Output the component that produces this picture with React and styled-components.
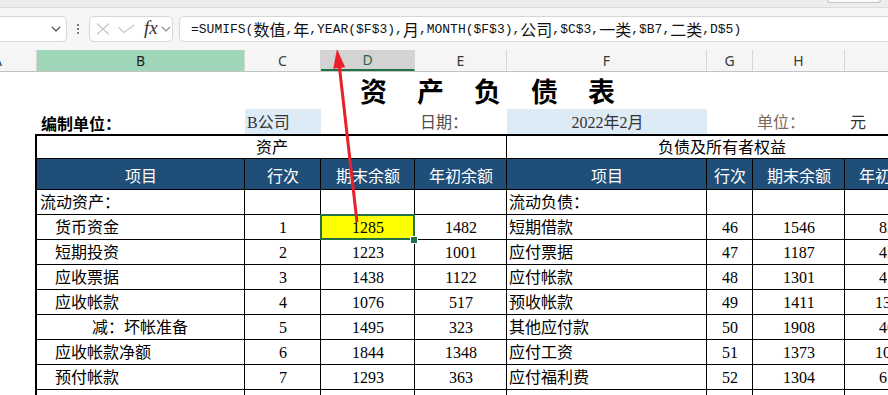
import React from "react";
import styled, { createGlobalStyle, css } from "styled-components";

const COLS = "37px 208px 76px 94px 92px 200px 46px 92px 92px";

const GlobalStyle = createGlobalStyle`
  html, body {
    margin: 0;
    padding: 0;
    background: #fff;
  }
  body {
    width: 888px;
    height: 395px;
    overflow: hidden;
    font-family: "Noto Sans", "Noto Sans CJK SC", sans-serif;
  }
`;

const Page = styled.div`
  position: relative;
  width: 888px;
  height: 395px;
  overflow: hidden;
  display: flex;
  flex-direction: column;
`;

const RibbonEdge = styled.div`
  height: 7px;
  flex-shrink: 0;
  display: flex;
  justify-content: flex-end;
  background: #ededed;
  border-bottom: 1px solid #dcdcdc;
`;

const RibbonButtonTail = styled.div`
  width: 52px;
  height: 2px;
  margin-right: 7px;
  border: 1px solid #c4c4c4;
  border-top: none;
  border-radius: 0 0 4px 4px;
  background: #fafafa;
`;

const FormulaBar = styled.div`
  height: 42px;
  box-sizing: border-box;
  padding: 8px 0;
  flex-shrink: 0;
  display: flex;
  background: #f6f6f6;
`;

const Box = styled.div`
  box-sizing: border-box;
  flex-shrink: 0;
  background: #fff;
  border: 1px solid #d6d6d6;
  border-radius: 5px;
  display: flex;
  align-items: center;
`;

const NameBox = styled(Box)`
  width: 73px;
  margin-left: -6px;
  justify-content: flex-end;
  padding-right: 5px;
`;

const Dots = styled.div`
  width: 22px;
  flex-shrink: 0;
  display: flex;
  flex-direction: column;
  align-items: center;
  justify-content: center;
  gap: 2px;
  span {
    width: 2px;
    height: 2px;
    background: #555;
    border-radius: 1px;
  }
`;

const FxBox = styled(Box)`
  width: 84px;
  padding-left: 6px;
`;

const FxLabel = styled.span`
  font-family: "Liberation Serif", serif;
  font-style: italic;
  font-size: 19px;
  color: #333;
  margin: -3px 3px 0 9px;
`;

const FormulaInput = styled(Box)`
  width: 760px;
  margin-left: 6px;
  padding-left: 11px;
  border-radius: 5px 0 0 5px;
  font-family: "Liberation Mono", monospace;
  font-size: 13px;
  color: #111;
  white-space: nowrap;
`;

const Cjk = styled.span`
  font-family: "Noto Sans CJK SC", sans-serif;
  font-size: 16px;
`;

const HeaderRow = styled.div`
  display: grid;
  grid-template-columns: ${COLS};
  height: 21px;
  flex-shrink: 0;
  background: #f5f5f5;
  border-bottom: 1px solid #c3c3c3;
`;

const ColHead = styled.div`
  box-sizing: border-box;
  display: flex;
  align-items: center;
  justify-content: ${(p) => (p.$edge ? "flex-end" : "center")};
  padding-right: ${(p) => (p.$edge ? "34px" : "0")};
  overflow: hidden;
  font-size: 14px;
  color: #3a3a3a;
  border-right: 1px solid #d6d6d6;
  ${(p) =>
    p.$state === "sel" &&
    css`
      background: #a0d6b8;
      color: #1f1f1f;
    `}
  ${(p) =>
    p.$state === "active" &&
    css`
      background: #d3d3d3;
      color: #1d6b3f;
      border-bottom: 2px solid #217346;
    `}
`;

const Sheet = styled.div`
  display: flex;
  flex-direction: column;
`;

const Row = styled.div`
  display: grid;
  grid-template-columns: ${COLS};
  height: ${(p) => p.$h || 25}px;
  flex-shrink: 0;
`;

const Cell = styled.div`
  position: relative;
  box-sizing: border-box;
  grid-column: span ${(p) => p.$span || 1};
  display: flex;
  align-items: flex-end;
  justify-content: ${(p) =>
    p.$align === "center" ? "center" : p.$align === "right" ? "flex-end" : "flex-start"};
  padding: 0 2px ${(p) => (p.$pb ?? 1)}px ${(p) => p.$indent ?? 3}px;
  white-space: nowrap;
  font-family: "Liberation Serif", "Noto Sans CJK SC", serif;
  font-size: 16px;
  line-height: 20px;
  color: ${(p) => p.$color || "#000"};
  font-weight: ${(p) => (p.$bold ? 700 : 400)};
  background: ${(p) => p.$bg || "transparent"};
  ${(p) =>
    p.$boxed &&
    css`
      border-right: 1px solid #000;
      border-bottom: 1px solid #000;
    `}
  ${(p) =>
    p.$top &&
    css`
      border-top: 2px solid #000;
    `}
  ${(p) =>
    p.$selected &&
    css`
      background: #ffff00;
      &::before {
        content: "";
        position: absolute;
        inset: -1px -1px -1px -1px;
        border: 2px solid #217346;
        z-index: 2;
      }
      &::after {
        content: "";
        position: absolute;
        right: -4px;
        bottom: -5px;
        width: 6px;
        height: 6px;
        background: #217346;
        border: 1px solid #fff;
        z-index: 3;
      }
    `}
`;

const LabelCell = styled(Cell)`
  font-family: "Noto Sans CJK SC", sans-serif;
`;

const EdgeCell = styled.div`
  box-sizing: border-box;
  border-right: 2px solid #000;
`;

const HeadCell = styled(Cell)`
  background: #1f4e79;
  color: #fff;
  font-family: "Noto Sans CJK SC", sans-serif;
  justify-content: center;
  padding-bottom: 4px;
`;

const Title = styled(Cell)`
  font-family: "Noto Sans CJK SC", sans-serif;
  font-size: 27px;
  font-weight: 700;
  letter-spacing: 30px;
  line-height: 32px;
  padding-bottom: 2px;
  & > span {
    margin-right: -30px;
  }
`;

const ArrowLayer = styled.svg`
  position: absolute;
  left: 0;
  top: 0;
  pointer-events: none;
  z-index: 10;
`;

const formula =
  "=SUMIFS(数值,年,YEAR($F$3),月,MONTH($F$3),公司,$C$3,一类,$B7,二类,D$5)";

function FormulaText({ text }) {
  const parts = text.split(/([\u4e00-\u9fff]+)/).filter(Boolean);
  return parts.map((p, i) =>
    /[\u4e00-\u9fff]/.test(p) ? <Cjk key={i}>{p}</Cjk> : <span key={i}>{p}</span>
  );
}

const columns = [
  { l: "A", edge: true },
  { l: "B", state: "sel" },
  { l: "C" },
  { l: "D", state: "active" },
  { l: "E" },
  { l: "F" },
  { l: "G" },
  { l: "H" },
  { l: "I" },
];

const rows = [
  { left: ["流动资产：", 0, "", "", ""], right: ["流动负债：", "", "", ""] },
  { left: ["货币资金", 1, "1", "1285", "1482"], right: ["短期借款", "46", "1546", "836"], sel: true },
  { left: ["短期投资", 1, "2", "1223", "1001"], right: ["应付票据", "47", "1187", "452"] },
  { left: ["应收票据", 1, "3", "1438", "1122"], right: ["应付帐款", "48", "1301", "417"] },
  { left: ["应收帐款", 1, "4", "1076", "517"], right: ["预收帐款", "49", "1411", "1320"] },
  { left: ["减：坏帐准备", 2, "5", "1495", "323"], right: ["其他应付款", "50", "1908", "468"] },
  { left: ["应收帐款净额", 1, "6", "1844", "1348"], right: ["应付工资", "51", "1373", "1045"] },
  { left: ["预付帐款", 1, "7", "1293", "363"], right: ["应付福利费", "52", "1304", "612"] },
  { left: ["", 1, "", "", ""], right: ["", "", "", ""] },
];

const indents = [3, 18, 55];

function Cross() {
  return (
    <svg width="14" height="14" viewBox="0 0 14 14" style={{ marginRight: 8 }}>
      <path d="M1 1.5 L13 12.5 M13 1.5 L1 12.5" stroke="#c6c6c6" strokeWidth="1.2" fill="none" />
    </svg>
  );
}

function Tick() {
  return (
    <svg width="17" height="10" viewBox="0 0 17 10">
      <path d="M0.5 3.5 L6 8.5 L16.5 0.8" stroke="#c6c6c6" strokeWidth="1.2" fill="none" />
    </svg>
  );
}

function Chevron({ color = "#555" }) {
  return (
    <svg width="10" height="6" viewBox="0 0 10 6">
      <path d="M0.8 0.8 L5 5 L9.2 0.8" stroke={color} strokeWidth="1.2" fill="none" />
    </svg>
  );
}

export default function App() {
  return (
    <Page>
      <GlobalStyle />
      <RibbonEdge>
        <RibbonButtonTail />
      </RibbonEdge>
      <FormulaBar>
        <NameBox>
          <Chevron color="#444" />
        </NameBox>
        <Dots>
          <span />
          <span />
          <span />
        </Dots>
        <FxBox>
          <Cross />
          <Tick />
          <FxLabel>fx</FxLabel>
          <Chevron color="#888" />
        </FxBox>
        <FormulaInput>
          <FormulaText text={formula} />
        </FormulaInput>
      </FormulaBar>

      <HeaderRow>
        {columns.map((c) => (
          <ColHead key={c.l} $edge={c.edge} $state={c.state}>
            {c.l}
          </ColHead>
        ))}
      </HeaderRow>

      <Sheet>
        <Row $h={37}>
          <div />
          <Title $span={8} $align="center">
            <span>资产负债表</span>
          </Title>
        </Row>

        <Row $h={25}>
          <div />
          <LabelCell $bold $indent={4}>
            编制单位：
          </LabelCell>
          <Cell $bg="#ddebf7" $indent={2} $color="#333">
            B公司
          </Cell>
          <Cell />
          <Cell $indent={5} $color="#4f4f4f">
            日期：
          </Cell>
          <Cell $bg="#ddebf7" $align="center" $color="#333">
            2022年2月
          </Cell>
          <Cell />
          <Cell $indent={4} $color="#7a6a58">
            单位：
          </Cell>
          <Cell $indent={5} $color="#333">
            元
          </Cell>
        </Row>

        <Row $h={25}>
          <EdgeCell />
          <Cell $span={4} $align="center" $boxed $top $pb={0}>
            资产
          </Cell>
          <Cell $span={4} $align="center" $boxed $top $pb={0}>
            负债及所有者权益
          </Cell>
        </Row>

        <Row $h={31}>
          <EdgeCell />
          {["项目", "行次", "期末余额", "年初余额", "项目", "行次", "期末余额", "年初余额"].map((h, i) => (
            <HeadCell key={i} $boxed>
              {h}
            </HeadCell>
          ))}
        </Row>

        {rows.map((r, i) => (
          <Row key={i} $h={25}>
            <EdgeCell />
            <Cell $boxed $indent={indents[r.left[1]]}>
              {r.left[0]}
            </Cell>
            <Cell $boxed $align="center">
              {r.left[2]}
            </Cell>
            <Cell $boxed $align="center" $selected={r.sel}>
              {r.left[3]}
            </Cell>
            <Cell $boxed $align="center">
              {r.left[4]}
            </Cell>
            <Cell $boxed $indent={2}>
              {r.right[0]}
            </Cell>
            <Cell $boxed $align="center">
              {r.right[1]}
            </Cell>
            <Cell $boxed $align="center">
              {r.right[2]}
            </Cell>
            <Cell $boxed $align="center">
              {r.right[3]}
            </Cell>
          </Row>
        ))}
      </Sheet>

      <ArrowLayer width="888" height="395" viewBox="0 0 888 395">
        <line x1="357" y1="222" x2="339.3" y2="66" stroke="#e8202a" strokeWidth="3" />
        <polygon points="337,49 345.2,67.3 333.2,68.7" fill="#e8202a" />
      </ArrowLayer>
    </Page>
  );
}
